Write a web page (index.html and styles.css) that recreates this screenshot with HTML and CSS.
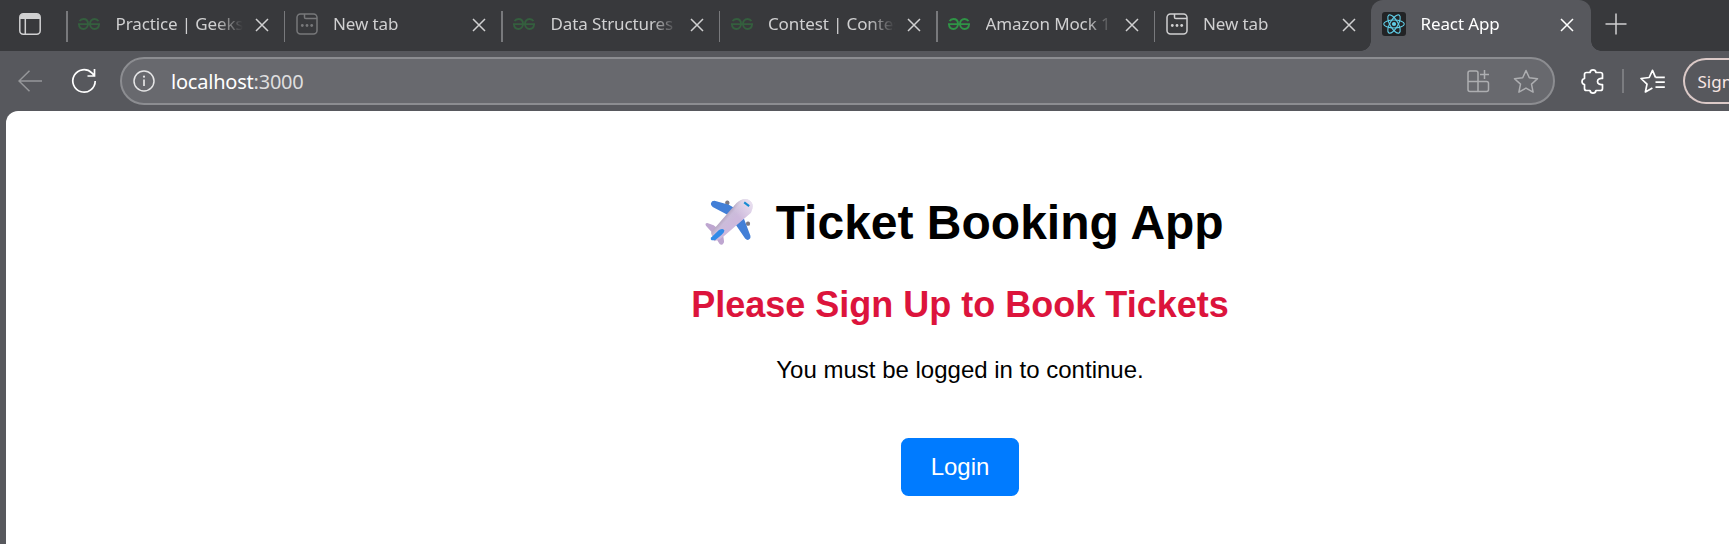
FILE: index.html
```html
<!DOCTYPE html>
<html lang="en">
<head>
<meta charset="utf-8">
<title>React App</title>
<link rel="stylesheet" href="styles.css">
</head>
<body>
<svg class="defs" width="0" height="0">
  <symbol id="close" viewBox="0 0 14 14"><path d="M1 1l12 12M13 1L1 13" fill="none" stroke="currentColor" stroke-width="1.5"/></symbol>
  <symbol id="geeks" viewBox="0 0 22 12"><path d="M0 6.1H22M1.6 3.2C2.4 1.6 3.8 1 5.4 1c2.8 0 4.6 2 4.6 4.8S8.2 11 5.4 11C2.900 11 1.100 9 1 6.300M20.400 3.200C19.600 1.600 18.200 1 16.600 1c-2.800 0-4.600 2-4.600 4.800S13.800 11 16.600 11c2.500 0 4.300-2 4.400-4.700" fill="none" stroke="currentColor" stroke-width="1.9"/></symbol>
  <symbol id="newtab" viewBox="0 0 22 22"><g fill="none" stroke="currentColor" stroke-width="1.5"><rect x="1" y="1" width="20" height="20" rx="3.5"/><path d="M8.500 1v3.200q0 1.300 1.300 1.300H21"/></g><g fill="currentColor"><circle cx="6.300" cy="12.500" r="1.400"/><circle cx="11" cy="12.500" r="1.400"/><circle cx="15.700" cy="12.500" r="1.400"/></g></symbol>
</svg>
<header class="tabbar">
  <div class="tab-actions"><svg width="22" height="22" viewBox="0 0 22 22"><rect x=".8" y=".8" width="20.400" height="20.400" rx="3.500" fill="none" stroke="currentColor" stroke-width="1.500"/><path d="M1 6V4q0-3 3-3h14q3 0 3 3v2z" fill="currentColor"/><path d="M6.300 6v15" stroke="currentColor" stroke-width="1.500"/></svg></div>
  <div class="tab"><svg class="icon geeks dim"><use href="#geeks"/></svg><span class="title">Practice | Geeksf</span><svg class="close"><use href="#close"/></svg></div>
  <div class="tab"><svg class="icon dim"><use href="#newtab"/></svg><span class="title">New tab</span><svg class="close"><use href="#close"/></svg></div>
  <div class="tab"><svg class="icon geeks dim"><use href="#geeks"/></svg><span class="title">Data Structures</span><svg class="close"><use href="#close"/></svg></div>
  <div class="tab"><svg class="icon geeks dim"><use href="#geeks"/></svg><span class="title">Contest | Contes</span><svg class="close"><use href="#close"/></svg></div>
  <div class="tab"><svg class="icon geeks"><use href="#geeks"/></svg><span class="title">Amazon Mock 1</span><svg class="close"><use href="#close"/></svg></div>
  <div class="tab"><svg class="icon"><use href="#newtab"/></svg><span class="title">New tab</span><svg class="close"><use href="#close"/></svg></div>
  <div class="tab active">
    <svg class="react" viewBox="0 0 24 24"><rect width="24" height="24" rx="3" fill="#222325"/><g fill="none" stroke="#61cfe9" stroke-width="1.100"><ellipse cx="12" cy="12" rx="10.300" ry="4"/><ellipse cx="12" cy="12" rx="10.300" ry="4" transform="rotate(60 12 12)"/><ellipse cx="12" cy="12" rx="10.300" ry="4" transform="rotate(120 12 12)"/></g><circle cx="12" cy="12" r="2.100" fill="#61cfe9"/></svg>
    <span class="title">React App</span><svg class="close"><use href="#close"/></svg>
  </div>
  <div class="plus"><svg width="22" height="22" viewBox="0 0 22 22"><path d="M11 .5v21M.5 11h21" stroke="currentColor" stroke-width="1.500"/></svg></div>
</header>
<nav class="toolbar">
  <svg class="back" width="24" height="22" viewBox="0 0 24 22"><path d="M24 11H1M11.500 .8L1 11l10.500 10.200" fill="none" stroke="currentColor" stroke-width="1.500"/></svg>
  <svg class="reload" width="26" height="26" viewBox="0 0 26 26"><path d="M24.200 13A11.200 11.200 0 1 1 20.800 4.900L23.500 7.700M23.500 1v7H16.500" fill="none" stroke="currentColor" stroke-width="1.700"/></svg>
  <div class="address">
    <svg width="22" height="22" viewBox="0 0 22 22"><circle cx="11" cy="11" r="10" fill="none" stroke="currentColor" stroke-width="1.500"/><path d="M11 9.500v6.500" stroke="currentColor" stroke-width="1.700"/><circle cx="11" cy="6.700" r="1.100" fill="currentColor"/></svg>
    <span class="url">localhost<span class="port">:3000</span></span>
    <svg class="apps" width="23" height="23" viewBox="0 0 23 23"><path d="M11 11.500V3q0-2-2-2H3Q1 1 1 3v16.500q0 2 2 2h16.500q2 0 2-2v-6q0-2-2-2H1M11 11.500v10M17.500 0v9M13 4.500h9" fill="none" stroke="currentColor" stroke-width="1.500"/></svg>
    <svg class="star" width="26" height="25" viewBox="0 0 26 25"><path d="M13 1.500l3.300 7.200 8.200 1-6 5.400 1.600 8-7.100-4-7.100 4 1.600-8-6-5.400 8.200-1z" fill="none" stroke="currentColor" stroke-width="1.500" stroke-linejoin="round"/></svg>
  </div>
  <svg class="puzzle" width="23" height="25" viewBox="0 0 23 25"><path d="M5.500 3.500h3.500c.6-3.400 5.400-3.400 6 0h4.500q2 0 2 2v4c-2.800-.3-5 .6-5 3s2.200 3.300 5 3v4q0 2-2 2H15c-.6 3.400-5.400 3.400-6 0H5.500q-2 0-2-2v-4c-3.300-.6-3.300-5.400 0-6v-4q0-2 2-2z" fill="none" stroke="currentColor" stroke-width="1.700" stroke-linejoin="round"/></svg>
  <span class="divider"></span>
  <svg class="favs" width="25" height="25" viewBox="0 0 25 25"><path d="M15.500 8.300L12.500 1.300 9.200 8.500 1 9.500l6 5.700-1.600 7.700 7-4M15.500 8.300h9.300M15.500 13.200h9.300M15.500 18.100h9.300" fill="none" stroke="currentColor" stroke-width="1.700" stroke-linejoin="round"/></svg>
  <div class="signin">Sign</div>
</nav>
<main class="page">
  <h1 class="heading"><svg class="plane" width="66" height="52" viewBox="0 0 66 52">
    <defs><linearGradient id="body" gradientUnits="userSpaceOnUse" x1="27" y1="19" x2="37" y2="28"><stop offset="0" stop-color="#a999b1"/><stop offset=".5" stop-color="#cbbcda"/><stop offset="1" stop-color="#cdb9dc"/></linearGradient><linearGradient id="nose" x1="0" y1="1" x2="1" y2="0"><stop offset=".6" stop-color="#fff" stop-opacity="0"/><stop offset="1" stop-color="#fff" stop-opacity=".65"/></linearGradient></defs>
    <g transform="translate(3.200 -.8) scale(.9 .94)">
    <g fill="#7d7982"><rect x="29" y="4.500" width="4.500" height="5" rx="2"/><rect x="52" y="27" width="4.500" height="4.500" rx="2"/></g>
    <path d="M18 5q-4-.5-5 2.500-.5 2.500 2 4L34 21l17 24q3 3 5.500 0 .7-1 .4-3L47 17 33 9z" fill="#427fd7"/>
    <path d="M16 31l-7-2.500q-3 0-1.500 3l8 8.500 7 10.500q2.500 2.500 4.500-.5 1-1.500.5-3l-1.500-9z" fill="#bea6d0"/>
    <path d="M41.500 7.200Q50 .5 56 4.500t1.500 13L28 42q-5 4.500-11 6-1.500-1-.5-4-4-2-3-6z" fill="url(#body)"/>
    <path d="M41.500 7.200Q50 .5 56 4.500t1.500 13L28 42q-5 4.500-11 6z" fill="url(#nose)"/>
    <path d="M22 36q5-2.500 6 .5 0 2-3 4.500l-7 5.500q-4 1-5-.5-1-2 1.500-3z" fill="#318be8"/>
    <path d="M50 6.500l5.500 4" stroke="#168bd2" stroke-width="2.400"/>
    </g>
  </svg><span>&nbsp;Ticket Booking App</span></h1>
  <h2 class="notice">Please Sign Up to Book Tickets</h2>
  <p class="message">You must be logged in to continue.</p>
  <button class="login">Login</button>
</main>
</body>
</html>
```
FILE: styles.css
```css
* { box-sizing: border-box; }
body { margin: 0; height: 544px; overflow: hidden; background: #57585d; font-family: "Noto Sans", sans-serif; }
svg { display: block; flex: none; }
.defs { position: absolute; }
.tabbar { display: flex; height: 51px; background: #38393c; color: #d0d0d1; overflow: hidden; }
.tab-actions { flex: none; width: 66px; padding: 13px 0 0 19px; }
.tab { flex: none; display: flex; align-items: center; width: 217.5px; height: 51px; padding: 0 0 3px 12px; position: relative; }
.tab::before { content: ""; position: absolute; left: 0; top: 11px; width: 1.5px; height: 31px; background: #78797c; }
.icon { width: 22px; height: 22px; margin-right: 15.5px; }
.icon.geeks { height: 12px; color: #2f9446; }
.icon.dim { color: #77787a; }
.icon.geeks.dim { color: #345f3e; }
.title { width: 128px; height: 28px; overflow: hidden; white-space: nowrap; font-size: 17px; line-height: 28px; letter-spacing: -.12px; -webkit-mask-image: linear-gradient(90deg, #000 100px, transparent 127px); mask-image: linear-gradient(90deg, #000 100px, transparent 127px); }
.close { width: 14px; height: 14px; margin: 2px 0 0 11px; }
.tab.active { width: 219.5px; background: #57585d; color: #fff; border-radius: 12px 12px 0 0; padding-left: 11px; }
.tab.active::before, .tab.active::after { content: ""; position: absolute; width: 10px; height: 10px; top: 41px; }
.tab.active::before { left: -10px; background: radial-gradient(circle at 0 0, transparent 9.5px, #57585d 10px); }
.tab.active::after { right: -10px; background: radial-gradient(circle at 100% 0, transparent 9.5px, #57585d 10px); }
.react { width: 24px; height: 24px; margin-right: 14.5px; }
.plus { padding: 12.500px 0 0 14.5px; }
.toolbar { display: flex; align-items: center; height: 60px; color: #fff; padding-left: 18px; overflow: hidden; }
.back { color: #96979a; margin-right: 29px; }
.reload { margin-right: 23px; }
.address { flex: none; display: flex; align-items: center; width: 1435px; height: 48px; padding-left: 11px; border: 2px solid #8c8d91; border-radius: 24px; background: #68696e; color: #e5e5e6; }
.url { width: 1296px; margin-left: 16px; padding-top: 1px; font-size: 20px; line-height: 28px; letter-spacing: -.22px; color: #fff; }
.port { color: #dedede; }
.apps, .star { color: #adaeb1; }
.star { margin-left: 23px; }
.puzzle { margin-left: 26px; }
.divider { flex: none; width: 1.500px; height: 24px; margin: 0 17px 0 18px; background: #7b7c80; }
.favs { margin-left: -1px; }
.signin { flex: 1; height: 46px; margin-left: 18px; padding-left: 13px; border: 2px solid #dccac8; border-right: 0; border-radius: 23px 0 0 23px; color: #f8e6e3; font-size: 17px; line-height: 43px; white-space: nowrap; overflow: hidden; }
.page { display: flex; flex-direction: column; align-items: center; height: 433px; margin-left: 6px; padding: 84px 0 0 185px; border-radius: 12px 0 0; background: #fff; color: #000; font-family: "Liberation Sans", Arial, sans-serif; }
.heading { display: flex; align-items: center; margin: 0; font-size: 48px; line-height: 56px; }
.notice { margin: 33px 0 0; font-size: 36px; line-height: 42px; color: #dc143c; }
.message { margin: 30px 0 0; font-size: 24px; line-height: 28px; }
.login { width: 118px; height: 58px; margin: 54px 0 0; padding: 0; border: 0; border-radius: 7.500px; background: #007bff; color: #fff; font: 24px/28px "Liberation Sans", Arial, sans-serif; }
```
